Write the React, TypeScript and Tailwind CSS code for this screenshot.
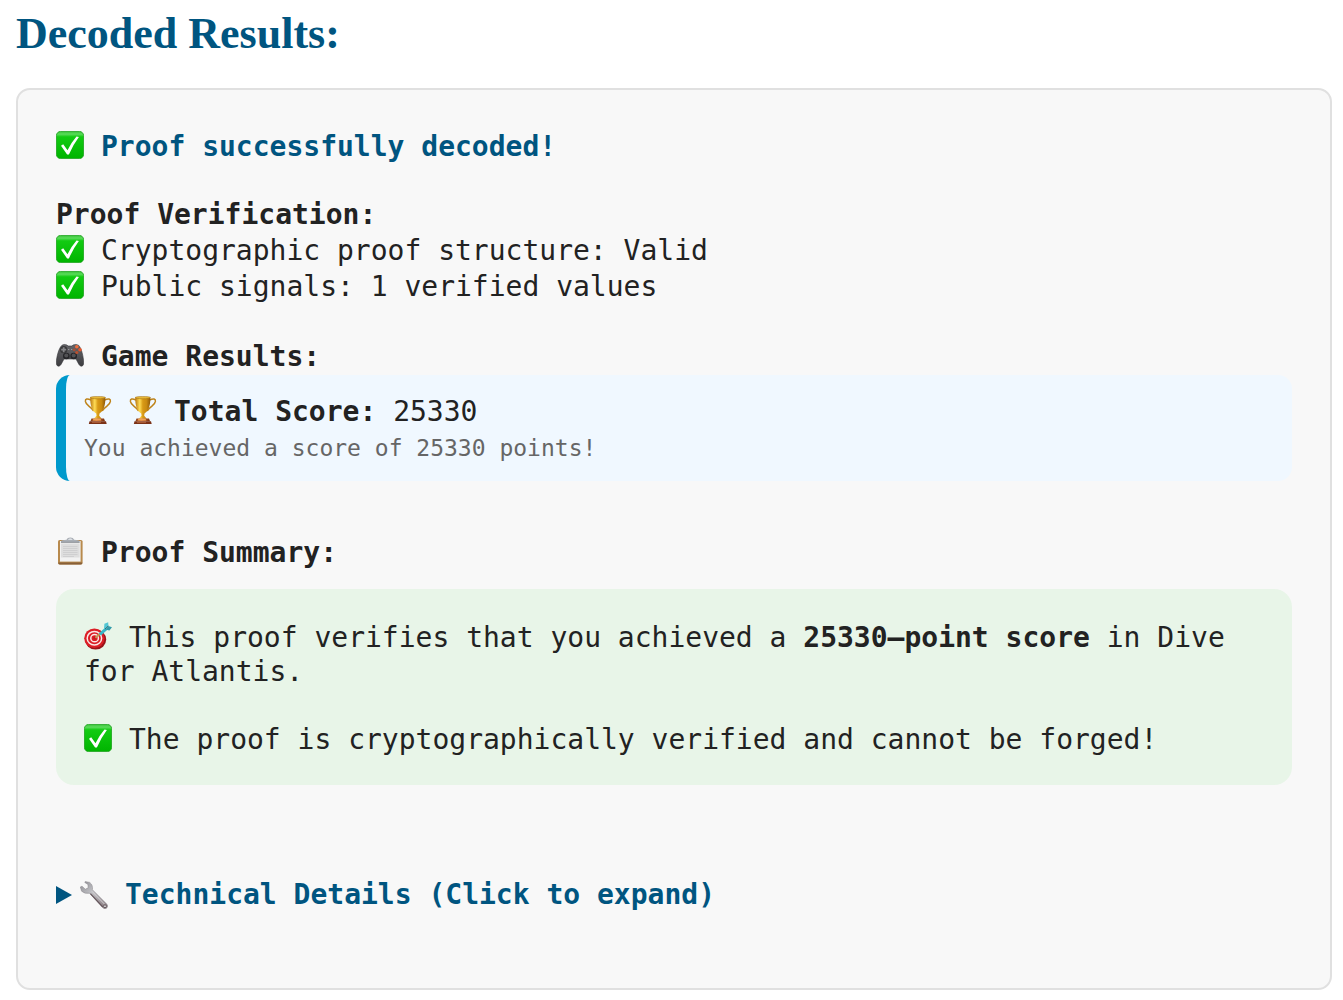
import type { ReactNode } from "react";

const iconClass = "mr-[17px] inline-block h-7 w-7 shrink-0 align-[-3px]";

function Gradients() {
  return (
    <svg className="absolute h-0 w-0" aria-hidden="true">
      <defs>
        <linearGradient id="check-face" x1="0" y1="0" x2="0" y2="1">
          <stop offset="0" stopColor="#35c435" />
          <stop offset="0.1" stopColor="#5cdb5c" />
          <stop offset="0.2" stopColor="#12cb12" />
          <stop offset="1" stopColor="#00b400" />
        </linearGradient>
        <linearGradient id="gold" x1="0" y1="0" x2="1" y2="0">
          <stop offset="0" stopColor="#b9770f" />
          <stop offset="0.3" stopColor="#ffdc55" />
          <stop offset="0.5" stopColor="#d89a16" />
          <stop offset="0.75" stopColor="#c98a10" />
          <stop offset="1" stopColor="#8c5708" />
        </linearGradient>
        <linearGradient id="base" x1="0" y1="0" x2="1" y2="0">
          <stop offset="0" stopColor="#7a3210" />
          <stop offset="0.4" stopColor="#d97a3c" />
          <stop offset="1" stopColor="#702a0c" />
        </linearGradient>
        <linearGradient id="pad" x1="0" y1="0" x2="0" y2="1">
          <stop offset="0" stopColor="#66666a" />
          <stop offset="1" stopColor="#3d3d40" />
        </linearGradient>
        <linearGradient id="steel" x1="0" y1="0" x2="1" y2="1">
          <stop offset="0" stopColor="#8e8e93" />
          <stop offset="0.4" stopColor="#c0c0c4" />
          <stop offset="1" stopColor="#85777c" />
        </linearGradient>
      </defs>
    </svg>
  );
}

function CheckIcon() {
  return (
    <svg viewBox="0 0 28 28" className={iconClass} aria-hidden="true">
      <rect x="0.4" y="0.4" width="27.2" height="27.2" rx="4.2" fill="url(#check-face)" stroke="#18a018" strokeWidth="0.8" />
      <path d="M5 14.8 7.2 13.3 11.5 19.3Q15.5 11.3 20.5 5.6L22.9 6.1Q17.3 13.6 12.9 23.4H11.1Z" fill="#fff" />
    </svg>
  );
}

function GamepadIcon() {
  return (
    <svg viewBox="0 0 28 28" className={iconClass} aria-hidden="true">
      <path d="M6 4.2Q8 2.8 11 4L12 5H16L17 4Q20 2.8 22.5 4.2C25.5 7 27.4 15.5 27.7 21.5C27.8 25.7 24.6 26.3 22.8 23.2L20 18H8L5.2 23.2C3.4 26.3.2 25.7.3 21.5C.6 15.5 2.8 7 6 4.2Z" fill="url(#pad)" stroke="#343437" strokeWidth="0.6" />
      <circle cx="7.7" cy="8.7" r="3.6" fill="#38383a" />
      <path d="M6.8 6.2H8.6V7.8H10.2V9.6H8.6V11.2H6.8V9.6H5.2V7.8H6.8Z" fill="#858588" />
      <circle cx="10.3" cy="15" r="3.3" fill="#252528" />
      <circle cx="17.7" cy="15" r="3.3" fill="#252528" />
      <circle cx="10.3" cy="14.6" r="2" fill="#515154" />
      <circle cx="17.7" cy="14.6" r="2" fill="#515154" />
      <path d="M12 8.5H13.3M15 8.5H16.3" stroke="#9a9a9c" />
      <circle cx="20.8" cy="5.8" r="1.8" fill="#f26d3a" />
      <circle cx="24" cy="8.8" r="1.8" fill="#e8582c" />
      <circle cx="20.8" cy="11.5" r="1.6" fill="#b9502f" />
      <circle cx="18.2" cy="8.8" r="1.4" fill="#a94e36" />
    </svg>
  );
}

function TrophyIcon() {
  return (
    <svg viewBox="0 0 28 28" className={iconClass} aria-hidden="true">
      <path d="M7 4Q1 1.5 1.4 5.4C2 10 7 10 9.6 15M20.5 4Q26.8 1.5 26.4 5.4C25.8 10 20.8 10 18.2 15" fill="none" stroke="#be8319" strokeWidth="1.5" />
      <path d="M6.2 1.2H21.4C21.4 9 20 14.7 15.5 17.4L15.2 19.8 17.8 22.7H9.8L12.5 19.8 12.2 17.4C7.6 14.7 6.2 9 6.2 1.2Z" fill="url(#gold)" />
      <ellipse cx="13.8" cy="1.6" rx="7.6" ry="1.2" fill="#e8b938" stroke="#9d690f" strokeWidth="0.5" />
      <path d="M7.5 22.5H20L21 25.2H6.5Z" fill="url(#base)" />
      <path d="M9.5 22.8H16.5L17.3 24.5H8.7Z" fill="#f0a354" />
      <path d="M5.5 25.2H22L22.7 28H4.8Z" fill="#7b3217" />
      <path d="M8 26.2H17" stroke="#cc7b4c" strokeWidth="0.8" />
    </svg>
  );
}

function ClipboardIcon() {
  return (
    <svg viewBox="0 0 28 28" className={iconClass} aria-hidden="true">
      <rect x="2" y="3" width="24.6" height="24.4" rx="1.6" fill="#b88a4d" />
      <path d="M2.4 25.6H26.2V26.4Q26 27.4 24.6 27.4H4Q2.5 27.4 2.4 26.4Z" fill="#886039" />
      <path d="M4 4H24.6V24.6H4Z" fill="#f2f2f2" />
      <path d="M5 6.5H23.6V20.5H5Z" fill="#dedede" />
      <path d="M7 9.5H21.5M7 11.5H21.5M7 13.5H21.5M7 15.5H21.5M7 17.5H21.5M7 19.5H18" stroke="#cfcfd0" />
      <path d="M5 5.6V4Q6 2.9 10.5 2.7Q11.2.4 14.3.4Q17.4.4 18.1 2.7Q22.6 2.9 23.6 4V5.6Z" fill="#a9aeb5" />
      <path d="M11.8 2.7Q14.3.2 16.8 2.7Z" fill="#eef1f5" />
      <path d="M5 5.3H23.6" stroke="#81858b" strokeWidth="0.8" />
    </svg>
  );
}

function TargetIcon() {
  return (
    <svg viewBox="0 0 28 28" className={iconClass} aria-hidden="true">
      <ellipse cx="11.6" cy="17.6" rx="10.6" ry="10" fill="#99131a" />
      <ellipse cx="10.4" cy="16.2" rx="10.2" ry="9.8" fill="#dc1e26" />
      <ellipse cx="10.4" cy="16.2" rx="7.2" ry="6.8" fill="none" stroke="#fae7e6" strokeWidth="1.5" />
      <ellipse cx="10.6" cy="16.2" rx="3.8" ry="3.6" fill="none" stroke="#fae7e6" strokeWidth="1.5" />
      <circle cx="10.8" cy="16" r="1.5" fill="#c7161f" />
      <path d="M11.4 15.7 16.4 11.5" stroke="#c29a54" strokeWidth="1.8" />
      <path d="M14.8 11.6 21.2 5.4 23.4 7.8 17 13.6Z" fill="#38b7c7" />
      <path d="M20 7 20.4 1.8 24.2.2 24.4 4.2Z" fill="#52c7d4" />
      <path d="M21.3 7.5 24.4 4 28 5.2 25.4 8.5Z" fill="#319bab" />
      <path d="M21 7 24.3 3.9" stroke="#245f6c" strokeWidth="0.8" />
    </svg>
  );
}

function WrenchIcon() {
  return (
    <svg viewBox="0 0 28 28" className={iconClass} aria-hidden="true">
      <path d="M5.2.6 9.7 1.4Q13.2 4 12.4 8.7L26.7 23C29 25.6 26.3 29 23.4 27.2L9.4 12.2Q4.8 13.2 1.6 10.2L.3 6 2 5.2 5.3 8.2 8.2 6.8 7.9 3.4 4.8 1.5Z" fill="url(#steel)" stroke="#858187" strokeWidth="0.5" />
      <path d="M12 10.4 24.6 23.2" stroke="#dad8da" strokeWidth="0.9" />
      <path d="M10.4 12.7 22.8 26" stroke="#66565b" strokeWidth="1.1" />
      <circle cx="25" cy="25.2" r="1.4" fill="#e9e9ea" stroke="#5b4d52" strokeWidth="0.9" />
    </svg>
  );
}

function Title({ children }: { children: ReactNode }) {
  return <h2 className="font-bold">{children}</h2>;
}

export default function App() {
  return (
    <main className="min-h-screen bg-white px-4 pt-2 pr-[11px] pb-2">
      <Gradients />
      <h1 className="mb-7 font-['Liberation_Serif',serif] text-[44px] leading-[52px] font-bold text-[#005580]">
        Decoded Results:
      </h1>
      <section className="rounded-[14px] border-2 border-[#e0e0e0] bg-[#f8f8f8] px-[38px] pt-[39px] pb-[75px] font-['DejaVu_Sans_Mono',monospace] text-[28px] leading-9 text-[#222]">
        <p className="mb-8 font-bold text-[#005580]">
          <CheckIcon />
          Proof successfully decoded!
        </p>

        <Title>Proof Verification:</Title>
        <ul className="mb-[34px]">
          <li>
            <CheckIcon />
            Cryptographic proof structure: Valid
          </li>
          <li>
            <CheckIcon />
            Public signals: 1 verified values
          </li>
        </ul>

        <Title>
          <GamepadIcon />
          Game Results:
        </Title>
        <div className="mb-[54px] rounded-[14px] border-l-[10px] border-[#0099cc] bg-[#f0f8ff] px-[18px] pt-[19px] pb-[15px]">
          <p>
            <TrophyIcon />
            <TrophyIcon />
            <strong>Total Score:</strong> 25330
          </p>
          <p className="text-[23px] text-[#666]">You achieved a score of 25330 points!</p>
        </div>

        <Title>
          <ClipboardIcon />
          Proof Summary:
        </Title>
        <div className="mt-[18px] mb-[92px] rounded-[18px] bg-[#e8f5e8] px-7 pt-8 pb-7 leading-[34px]">
          <p className="mb-[34px]">
            <TargetIcon />
            This proof verifies that you achieved a <strong>25330–point score</strong> in Dive for Atlantis.
          </p>
          <p>
            <CheckIcon />
            The proof is cryptographically verified and cannot be forged!
          </p>
        </div>

        <details>
          <summary className="flex cursor-pointer list-none items-center font-bold text-[#005580]">
            <svg viewBox="0 0 16 18" className="mr-2 h-[18px] w-4 shrink-0" aria-hidden="true">
              <path d="M0 0 16 9 0 18Z" fill="currentColor" />
            </svg>
            <WrenchIcon />
            Technical Details (Click to expand)
          </summary>
        </details>
      </section>
    </main>
  );
}
